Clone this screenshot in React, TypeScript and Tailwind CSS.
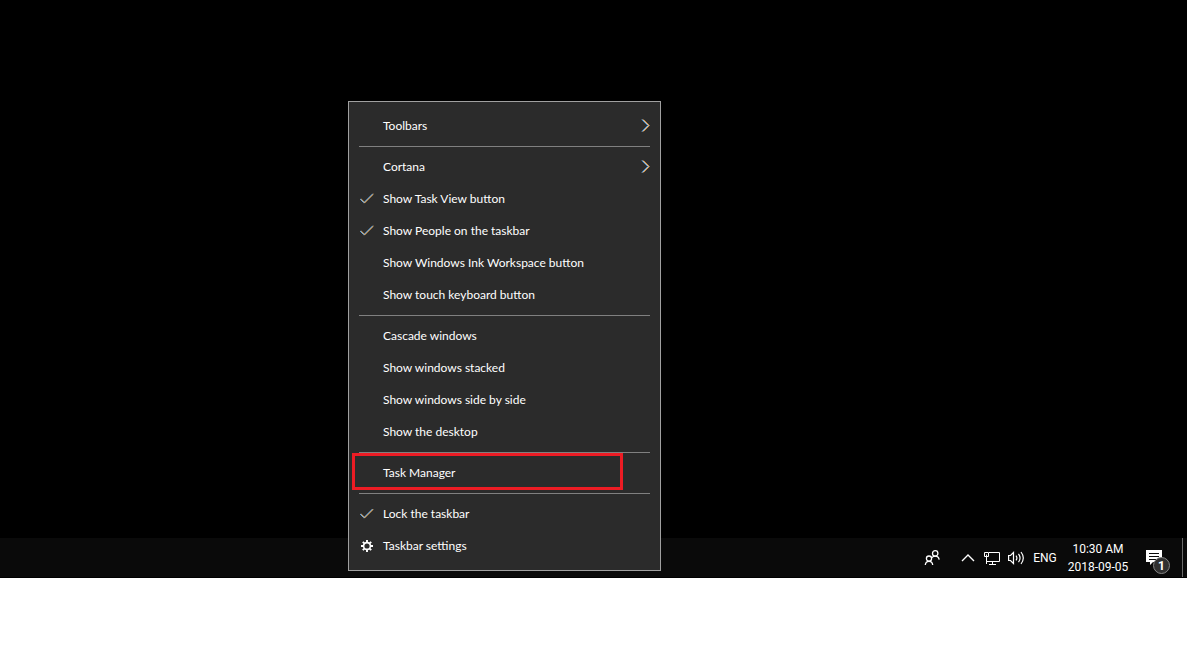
import type { ReactNode } from 'react';

interface MenuItem {
  label: string;
  icon?: 'check' | 'gear';
  submenu?: boolean;
  highlighted?: boolean;
}

const menuGroups: MenuItem[][] = [
  [{ label: 'Toolbars', submenu: true }],
  [
    { label: 'Cortana', submenu: true },
    { label: 'Show Task View button', icon: 'check' },
    { label: 'Show People on the taskbar', icon: 'check' },
    { label: 'Show Windows Ink Workspace button' },
    { label: 'Show touch keyboard button' },
  ],
  [
    { label: 'Cascade windows' },
    { label: 'Show windows stacked' },
    { label: 'Show windows side by side' },
    { label: 'Show the desktop' },
  ],
  [{ label: 'Task Manager', highlighted: true }],
  [
    { label: 'Lock the taskbar', icon: 'check' },
    { label: 'Taskbar settings', icon: 'gear' },
  ],
];

function CheckIcon() {
  return (
    <svg width="14" height="12" viewBox="0 0 14 12" fill="none" aria-hidden="true">
      <path d="M0 6L3.7 9.7L12.4 1" stroke="#4f9be0" />
      <path d="M1.2 6L4.9 9.7L13.6 1" stroke="#e8a850" />
      <path d="M0.6 6L4.3 9.7L13 1" stroke="#e0e0e0" strokeWidth="0.4" />
    </svg>
  );
}

function GearIcon() {
  return (
    <svg width="12" height="12" viewBox="0 0 12 12" fill="none" stroke="#fff" aria-hidden="true">
      <circle cx="6" cy="6" r="3.4" strokeWidth="1.6" />
      <path
        d="M6 0V2.4M6 9.6V12M0 6H2.4M9.6 6H12M1.8 1.8L3.4 3.4M8.6 8.6L10.2 10.2M10.2 1.8L8.6 3.4M3.4 8.6L1.8 10.2"
        strokeWidth="1.9"
      />
    </svg>
  );
}

function SubmenuIcon() {
  return (
    <svg width="9" height="14" viewBox="0 0 9 14" fill="none" aria-hidden="true">
      <path d="M0.8 0.5L6.8 6.5L0.8 12.5" stroke="#3f9be8" />
      <path d="M2.4 0.5L8.4 6.5L2.4 12.5" stroke="#e09030" />
      <path d="M1.6 0.5L7.6 6.5L1.6 12.5" stroke="#fff" strokeWidth="0.7" />
    </svg>
  );
}

function MenuRow({ item }: { item: MenuItem }) {
  return (
    <li role="none" className="relative">
      <button type="button" role="menuitem" className="flex h-8 w-full items-center pr-2.5 text-left hover:bg-[#414141]">
        <span className="flex w-[34px] shrink-0 justify-center pl-0.5">
          {item.icon === 'check' && <CheckIcon />}
          {item.icon === 'gear' && <GearIcon />}
        </span>
        <span className="flex-1 whitespace-nowrap">{item.label}</span>
        {item.submenu && <SubmenuIcon />}
      </button>
      {item.highlighted && (
        <span className="pointer-events-none absolute -top-1 -bottom-px left-[3px] right-[37px] border-3 border-[#ed1c24]" />
      )}
    </li>
  );
}

function ContextMenu() {
  return (
    <div
      role="menu"
      aria-label="Taskbar"
      className="absolute bottom-[7px] left-[348px] w-[313px] border border-[#a0a0a0] bg-[#2b2b2b] py-2 text-xs text-white"
    >
      {menuGroups.map((group, i) => (
        <div key={group[0].label} role="none">
          {i > 0 && <hr className="mx-2.5 my-1 border-[#808080]" />}
          <ul role="none">
            {group.map((item) => (
              <MenuRow key={item.label} item={item} />
            ))}
          </ul>
        </div>
      ))}
    </div>
  );
}

function TrayButton({ label, children }: { label: string; children: ReactNode }) {
  return (
    <button type="button" aria-label={label} className="flex h-full w-6 items-center justify-center">
      {children}
    </button>
  );
}

function PeopleIcon() {
  return (
    <svg width="16" height="16" viewBox="0 0 16 16" fill="none" stroke="#fff" strokeWidth="1.3" aria-hidden="true">
      <circle cx="5" cy="8.6" r="2.6" />
      <path d="M1.3 15C1.5 12.6 2.9 11.3 5 11.3S8.5 12.6 8.7 15" />
      <circle cx="11.2" cy="3.4" r="2.7" />
      <path d="M8 7.6C8.8 6.6 9.8 6.1 11.2 6.1C13.4 6.1 14.8 7.4 15.2 9.6" />
    </svg>
  );
}

function ChevronUpIcon() {
  return (
    <svg width="14" height="8" viewBox="0 0 14 8" fill="none" stroke="#fff" strokeWidth="1.4" aria-hidden="true">
      <path d="M1 7L7 1L13 7" />
    </svg>
  );
}

function NetworkIcon() {
  return (
    <svg width="16" height="14" viewBox="0 0 16 14" fill="none" stroke="#fff" aria-hidden="true">
      <path d="M5 1.5H15.5V10.5H2.5M8.5 10.5V13.5M5 13.5H12" />
      <path d="M0.5 1.5H4.5V5.5H0.5ZM2.5 3.5V13" />
    </svg>
  );
}

function VolumeIcon() {
  return (
    <svg width="17" height="14" viewBox="0 0 17 14" fill="none" stroke="#fff" strokeWidth="1.2" aria-hidden="true">
      <path d="M0.6 4.5H2.5L5.5 1.5V12.5L2.5 9.5H0.6Z" />
      <path d="M8 4.6Q9.8 7 8 9.4M10.5 2.8Q13.6 7 10.5 11.2M13 1Q17.6 7 13 13" />
    </svg>
  );
}

function NotificationIcon() {
  return (
    <svg width="16" height="16" viewBox="0 0 16 16" aria-hidden="true">
      <path d="M0 0H16V12H7L4 15V12H0Z" fill="#fff" />
      <path d="M3 3.5H13M3 6.5H13M3 9.5H10" stroke="#0a0a0a" />
    </svg>
  );
}

function Taskbar() {
  return (
    <footer className="flex h-10 items-center justify-end border-b border-black bg-[#0a0a0a] font-['Roboto','Open_Sans',sans-serif] text-xs text-white">
      <TrayButton label="People">
        <PeopleIcon />
      </TrayButton>
      <div className="ml-3 flex h-full">
        <TrayButton label="Show hidden icons">
          <ChevronUpIcon />
        </TrayButton>
        <TrayButton label="Network">
          <NetworkIcon />
        </TrayButton>
        <TrayButton label="Volume">
          <VolumeIcon />
        </TrayButton>
      </div>
      <button type="button" className="h-full w-[34px] text-center">
        ENG
      </button>
      <button type="button" className="h-full w-[72px] text-center leading-[18px]">
        <time dateTime="2018-09-05T10:30">
          <span className="block">10:30 AM</span>
          <span className="block">2018-09-05</span>
        </time>
      </button>
      <button type="button" aria-label="1 new notification" className="relative flex h-full w-12 items-center pl-3">
        <NotificationIcon />
        <span className="absolute bottom-[3px] left-[19px] flex size-[17px] items-center justify-center rounded-full border border-[#858585] bg-[#303030] text-xs leading-none font-bold">
          1
        </span>
      </button>
      <button type="button" aria-label="Show desktop" className="h-full w-[5px] border-l border-[#6b6b6b]" />
    </footer>
  );
}

export default function App() {
  return (
    <div className="flex h-screen flex-col bg-white pb-[77px] font-['Lato','Open_Sans',sans-serif]">
      <main className="relative flex flex-1 flex-col justify-end bg-black">
        <Taskbar />
        <ContextMenu />
      </main>
    </div>
  );
}
